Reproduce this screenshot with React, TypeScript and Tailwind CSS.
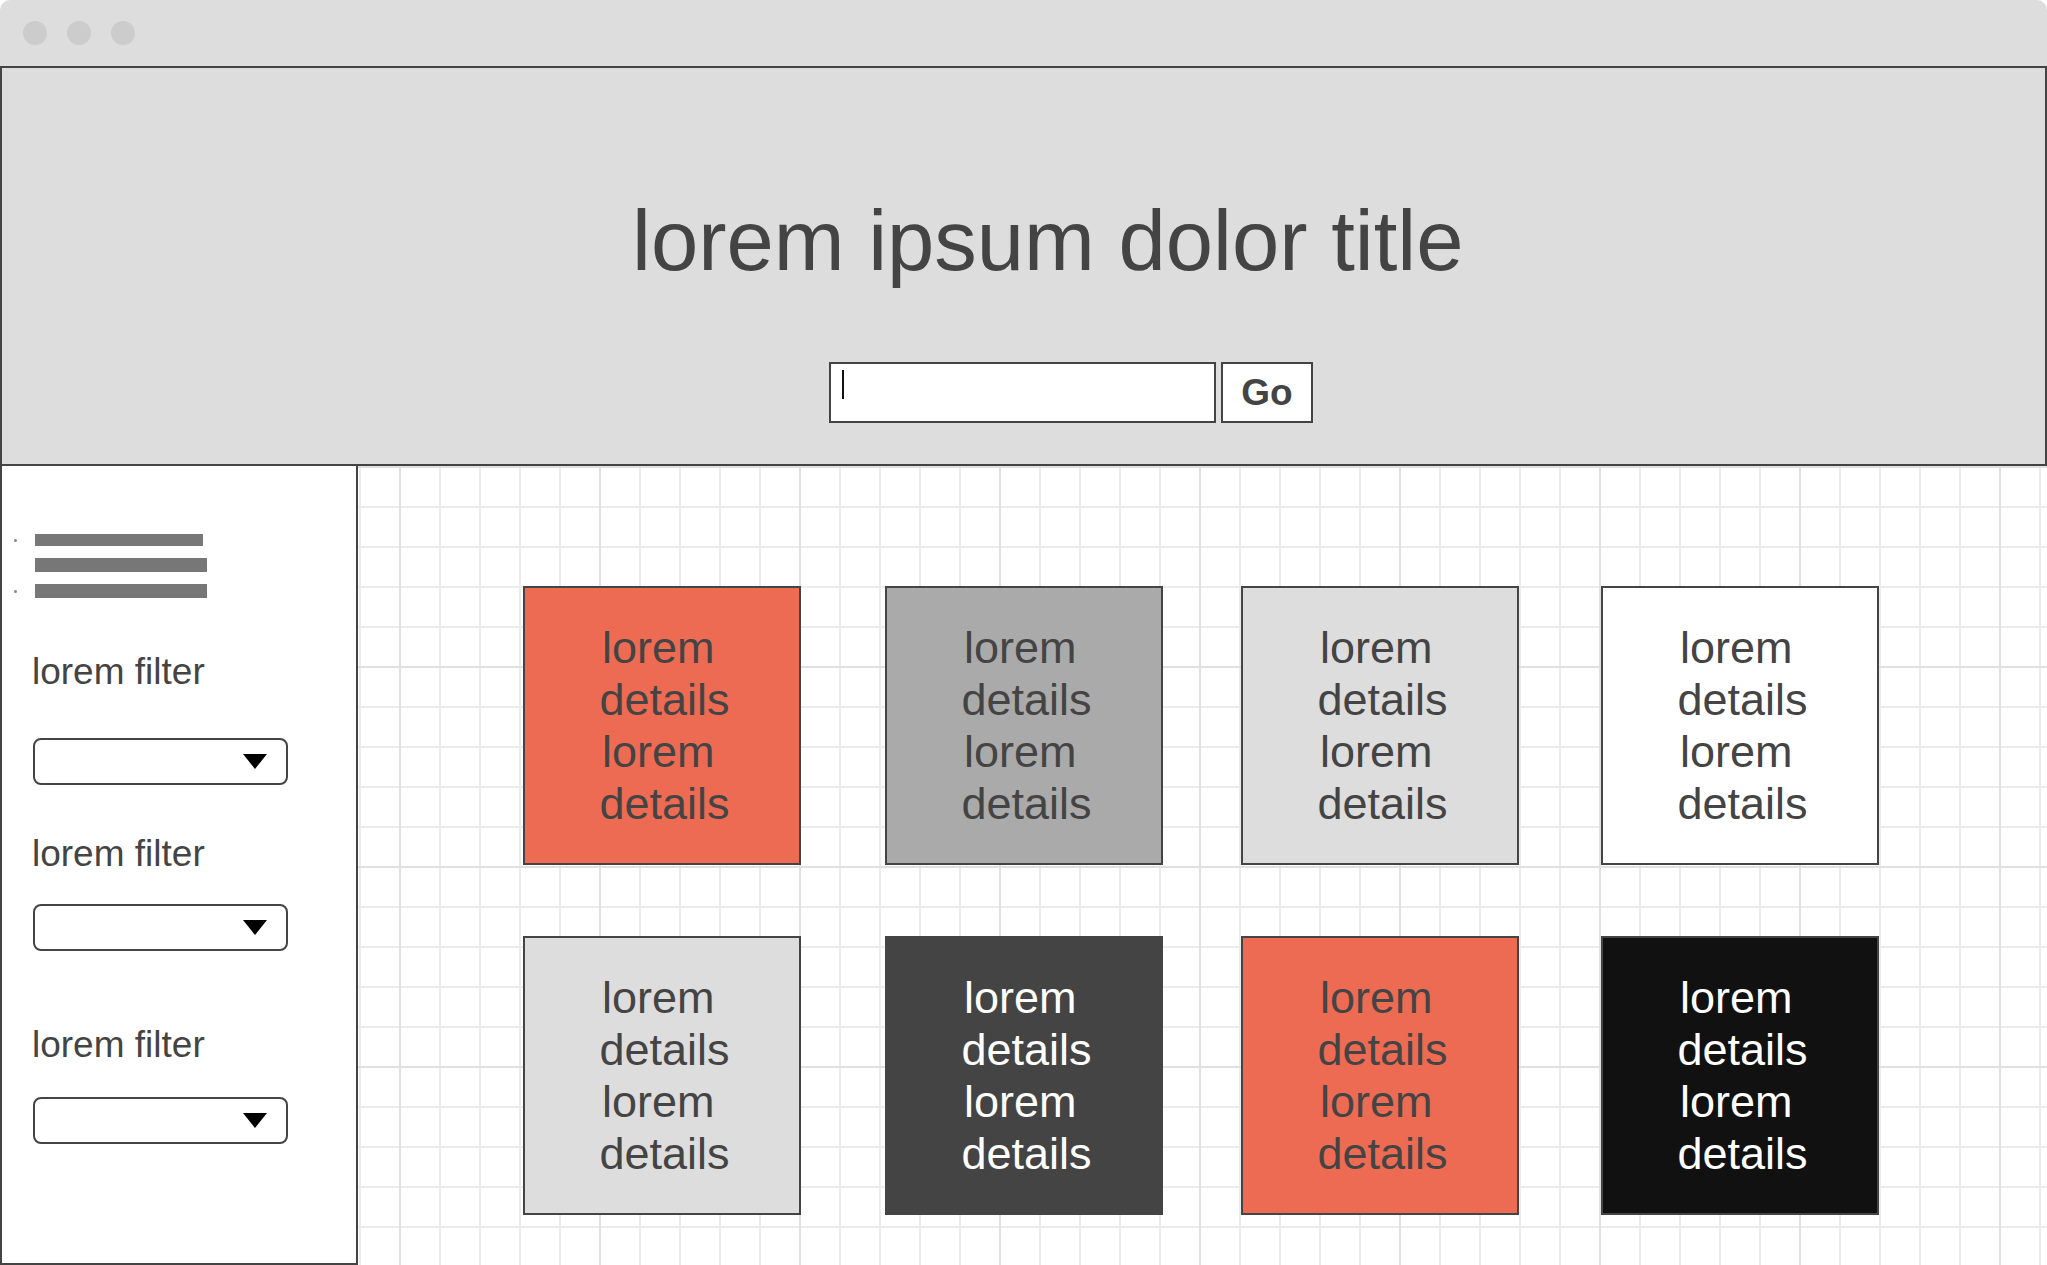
import React from 'react';

type Card = { bg: string; text: string; gap: string };

const rows: Card[][] = [
    [
        { bg: 'bg-[#ee6b53]', text: 'text-[#444444]', gap: 'ml-[165px]' },
        { bg: 'bg-[#aaaaaa]', text: 'text-[#444444]', gap: 'ml-[84px]' },
        { bg: 'bg-[#dddddd]', text: 'text-[#444444]', gap: 'ml-[78px]' },
        { bg: 'bg-white', text: 'text-[#444444]', gap: 'ml-[82px]' },
    ],
    [
        { bg: 'bg-[#dddddd]', text: 'text-[#444444]', gap: 'ml-[165px]' },
        { bg: 'bg-[#444444]', text: 'text-white', gap: 'ml-[84px]' },
        { bg: 'bg-[#ee6b53]', text: 'text-[#444444]', gap: 'ml-[78px]' },
        { bg: 'bg-[#111111]', text: 'text-white', gap: 'ml-[82px]' },
    ],
];

function DetailCard({ card }: { card: Card }) {
    return (
        <div className={`${card.gap} ${card.bg} ${card.text} w-[278px] h-[279px] border-2 border-[#444444] flex flex-col items-center justify-center pl-[5px] text-[45px] leading-[52px] text-center`}>
            <span className="whitespace-pre">{'lorem\u00a0'}</span>
            <span>details</span>
            <span className="whitespace-pre">{'lorem\u00a0'}</span>
            <span>details</span>
        </div>
    );
}

function Select({ className }: { className: string }) {
    return (
        <div className={`${className} ml-[31px] w-[255px] h-[47px] border-2 border-[#444444] rounded-[8px] bg-white flex items-center justify-end pr-[19px]`}>
            <svg width="24" height="15" viewBox="0 0 24 15">
                <polygon points="0,0 24,0 12,15" fill="#000000" />
            </svg>
        </div>
    );
}

function Bar({ dot, className }: { dot: boolean; className: string }) {
    return (
        <div className="flex items-center pl-[12px]">
            <span className={`w-[3px] h-[3px] rounded-full ${dot ? 'bg-[#888888]' : 'bg-transparent'}`} />
            <span className={`ml-[18px] bg-[#777777] ${className}`} />
        </div>
    );
}

export default function App() {
    return (
        <div className="w-[2047px] h-[1265px] bg-white overflow-hidden font-['Liberation_Sans',Arial,sans-serif]">
            {/* window chrome */}
            <div className="h-[66px] bg-[#dddddd] rounded-t-[10px] flex items-center gap-[20px] pl-[23px]">
                <span className="w-[24px] h-[24px] rounded-full bg-[#cccccc]" />
                <span className="w-[24px] h-[24px] rounded-full bg-[#cccccc]" />
                <span className="w-[24px] h-[24px] rounded-full bg-[#cccccc]" />
            </div>

            {/* hero */}
            <header className="h-[400px] bg-[#dddddd] border-2 border-[#444444] flex flex-col items-start">
                <h1 className="mt-[130px] ml-[630px] text-[85px] leading-none text-[#444444] whitespace-nowrap">
                    lorem ipsum dolor title
                </h1>
                <div className="mt-[79px] ml-[827px] flex gap-[5px]">
                    <div className="w-[387px] h-[61px] border-2 border-[#444444] bg-white pl-[11px] pt-[6px]">
                        <span className="block w-[2px] h-[29px] bg-[#111111]" />
                    </div>
                    <button className="w-[92px] h-[61px] border-2 border-[#444444] bg-white flex items-center justify-center text-[37px] font-bold text-[#444444] leading-none">
                        Go
                    </button>
                </div>
            </header>

            <div className="flex h-[799px]">
                {/* filters */}
                <aside className="w-[358px] shrink-0 h-full bg-white border-2 border-t-0 border-[#444444] flex flex-col text-[#444444]">
                    <div className="mt-[68px] flex flex-col gap-[12px]">
                        <Bar dot className="w-[168px] h-[12px]" />
                        <Bar dot={false} className="w-[172px] h-[14px]" />
                        <Bar dot className="w-[172px] h-[14px]" />
                    </div>
                    <p className="mt-[56px] ml-[30px] text-[37px] leading-[36px]">lorem filter</p>
                    <Select className="mt-[48px]" />
                    <p className="mt-[51px] ml-[30px] text-[37px] leading-[36px]">lorem filter</p>
                    <Select className="mt-[32px]" />
                    <p className="mt-[76px] ml-[30px] text-[37px] leading-[36px]">lorem filter</p>
                    <Select className="mt-[34px]" />
                </aside>

                {/* results on grid paper */}
                <main className="flex-1 h-full flex flex-col pt-[120px] gap-[71px] [background-image:linear-gradient(to_right,#e0e0e0_2px,transparent_2px),linear-gradient(to_bottom,#e0e0e0_2px,transparent_2px),linear-gradient(to_right,#ededed_2px,transparent_2px),linear-gradient(to_bottom,#ededed_2px,transparent_2px)] [background-size:200px_200px,200px_200px,40px_40px,40px_40px] [background-position:41px_0,0_0,41px_0,0_0]">
                    {rows.map((row, i) => (
                        <div key={i} className="flex">
                            {row.map((card, j) => (
                                <DetailCard key={j} card={card} />
                            ))}
                        </div>
                    ))}
                </main>
            </div>
        </div>
    );
}
